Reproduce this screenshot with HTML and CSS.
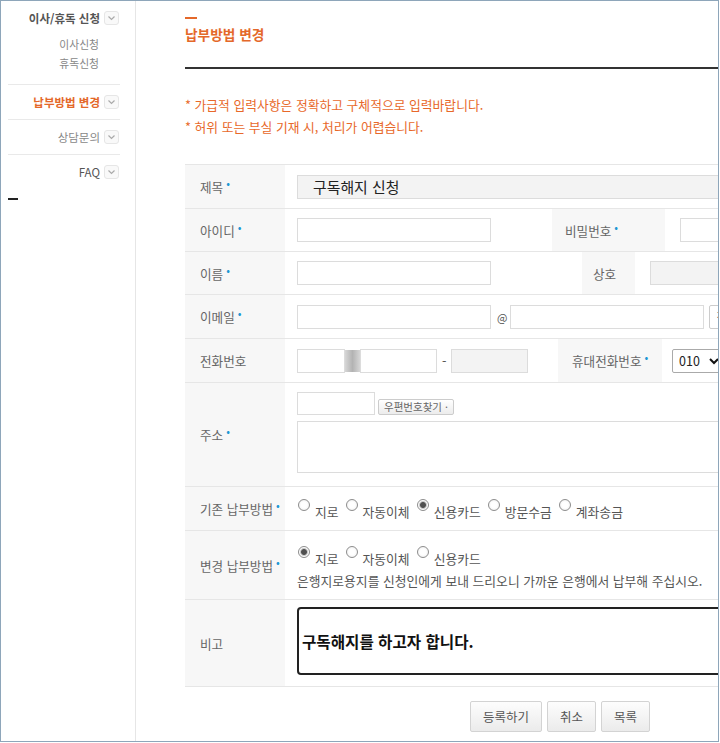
FILE: index.html
```html
<!DOCTYPE html>
<html lang="ko">
<head>
  <meta charset="UTF-8">
  <title>납부방법 변경</title>
  <link rel="stylesheet" href="styles.css">
</head>
<body>

  <div class="frame">
    <aside class="side">
      <ul class="menu">
        <li class="menu-item">
          <a class="menu-link strong">이사/휴독 신청
            <span class="chev"><svg width="13" height="12" viewBox="0 0 13 12"><polyline points="3.5,4.5 6.5,7.5 9.5,4.5" fill="none" stroke="#aaa" stroke-width="1.2"/></svg></span>
          </a>
          <ul class="sub">
            <li>이사신청</li>
            <li>휴독신청</li>
          </ul>
        </li>
        <li class="menu-item">
          <a class="menu-link active">납부방법 변경
            <span class="chev"><svg width="13" height="12" viewBox="0 0 13 12"><polyline points="3.5,4.5 6.5,7.5 9.5,4.5" fill="none" stroke="#aaa" stroke-width="1.2"/></svg></span>
          </a>
        </li>
        <li class="menu-item">
          <a class="menu-link">상담문의
            <span class="chev"><svg width="13" height="12" viewBox="0 0 13 12"><polyline points="3.5,4.5 6.5,7.5 9.5,4.5" fill="none" stroke="#aaa" stroke-width="1.2"/></svg></span>
          </a>
        </li>
        <li class="menu-item last">
          <a class="menu-link faq">FAQ
            <span class="chev"><svg width="13" height="12" viewBox="0 0 13 12"><polyline points="3.5,4.5 6.5,7.5 9.5,4.5" fill="none" stroke="#aaa" stroke-width="1.2"/></svg></span>
          </a>
        </li>
      </ul>
      <span class="side-dash"></span>
    </aside>

    <main class="content">
      <span class="title-dash"></span>
      <h2 class="title">납부방법 변경</h2>
      <div class="title-line"></div>

      <ul class="notice">
        <li>* 가급적 입력사항은 정확하고 구체적으로 입력바랍니다.</li>
        <li>* 허위 또는 부실 기재 시, 처리가 어렵습니다.</li>
      </ul>

      <div class="form">
        <div class="row row-44">
          <div class="th">제목<em class="req">•</em></div>
          <div class="td">
            <div class="in ro in-subject">구독해지 신청</div>
          </div>
        </div>

        <div class="row">
          <div class="th">아이디<em class="req">•</em></div>
          <div class="td td-id">
            <div class="in in-md"></div>
          </div>
          <div class="th th-pw">비밀번호<em class="req">•</em></div>
          <div class="td td-pw">
            <div class="in in-sm"></div>
          </div>
        </div>

        <div class="row">
          <div class="th">이름<em class="req">•</em></div>
          <div class="td td-name">
            <div class="in in-md"></div>
          </div>
          <div class="th th-co">상호</div>
          <div class="td td-co">
            <div class="in ro in-md"></div>
          </div>
        </div>

        <div class="row row-44">
          <div class="th">이메일<em class="req">•</em></div>
          <div class="td">
            <div class="in in-md"></div>
            <span class="at">@</span>
            <div class="in in-md"></div>
            <div class="sel sel-mail">직접</div>
          </div>
        </div>

        <div class="row row-44">
          <div class="th">전화번호</div>
          <div class="td td-phone">
            <div class="in in-xs"></div>
            <div class="blur"></div>
            <div class="in in-ph"></div>
            <span class="dash">-</span>
            <div class="in ro in-ph"></div>
          </div>
          <div class="th th-mob">휴대전화번호<em class="req">•</em></div>
          <div class="td td-mob">
            <div class="sel">010
              <svg width="12" height="10" viewBox="0 0 12 10"><polyline points="2,3 6,7 10,3" fill="none" stroke="#111" stroke-width="2"/></svg>
            </div>
          </div>
        </div>

        <div class="row row-addr">
          <div class="th">주소<em class="req">•</em></div>
          <div class="td td-addr">
            <div class="addr-top">
              <div class="in in-zip"></div>
              <button class="zip-btn" type="button">우편번호찾기 ·</button>
            </div>
            <div class="in in-addr"></div>
          </div>
        </div>

        <div class="row row-44">
          <div class="th">기존 납부방법<em class="req">•</em></div>
          <div class="td td-old">
            <div class="radios">
              <label class="opt"><input type="radio" name="old"><span>지로</span></label>
              <label class="opt"><input type="radio" name="old"><span>자동이체</span></label>
              <label class="opt"><input type="radio" name="old" checked><span>신용카드</span></label>
              <label class="opt"><input type="radio" name="old"><span>방문수금</span></label>
              <label class="opt"><input type="radio" name="old"><span>계좌송금</span></label>
            </div>
          </div>
        </div>

        <div class="row row-change">
          <div class="th">변경 납부방법<em class="req">•</em></div>
          <div class="td td-change">
            <div class="radios">
              <label class="opt"><input type="radio" name="new" checked><span>지로</span></label>
              <label class="opt"><input type="radio" name="new"><span>자동이체</span></label>
              <label class="opt"><input type="radio" name="new"><span>신용카드</span></label>
            </div>
            <p class="help">은행지로용지를 신청인에게 보내 드리오니 가까운 은행에서 납부해 주십시오.</p>
          </div>
        </div>

        <div class="row row-memo">
          <div class="th">비고</div>
          <div class="td td-memo">
            <div class="memo">구독해지를 하고자 합니다.</div>
          </div>
        </div>
      </div>

      <div class="btns">
        <button class="btn" type="button">등록하기</button>
        <button class="btn" type="button">취소</button>
        <button class="btn" type="button">목록</button>
      </div>
    </main>
  </div>

</body>
</html>
```

FILE: styles.css
```css
* {
  box-sizing: border-box;
}

body {
  margin: 0;
  font-family: "Noto Sans CJK KR", "Noto Sans", sans-serif;
  background-color: #fff;
  color: #555;
}

.frame {
  width: 719px;
  height: 742px;
  border: 1px solid #8ea6ba;
  display: flex;
  overflow: hidden;
}

/* sidebar */
.side {
  flex: none;
  width: 135px;
  border-right: 1px solid #e6e6e6;
}

.menu {
  list-style: none;
  margin: 0 0 0 7px;
  padding: 0;
  width: 112px;
}

.menu-item {
  border-bottom: 1px solid #e9e9e9;
}

.menu-item.last {
  border-bottom: none;
}

.menu-link {
  height: 34px;
  display: flex;
  align-items: center;
  justify-content: flex-end;
  gap: 4px;
  padding-right: 1px;
  font-size: 11.5px;
  color: #888;
}

.menu-link.strong {
  color: #555;
  font-weight: bold;
}

.menu-link.active {
  color: #e4682a;
  font-weight: bold;
}

.menu-link.faq {
  color: #555;
}

.chev {
  width: 15px;
  height: 14px;
  border: 1px solid #e6e6e6;
  border-radius: 3px;
  background-color: #f9f9f9;
  display: flex;
  align-items: center;
  justify-content: center;
}

.sub {
  list-style: none;
  margin: 0;
  padding: 0 21px 11px 0;
  text-align: right;
  font-size: 10.8px;
  line-height: 19px;
  color: #888;
}

.side-dash {
  display: block;
  width: 10px;
  height: 2px;
  margin: 9px 0 0 7px;
  background-color: #222;
}

/* content */
.content {
  flex: none;
  width: 820px;
  padding: 16px 0 0 49px;
}

.title-dash {
  display: block;
  width: 12px;
  height: 2px;
  background-color: #e4682a;
}

.title {
  margin: 5px 0 0;
  font-size: 13.7px;
  line-height: 20px;
  color: #e4682a;
}

.title-line {
  width: 750px;
  height: 2px;
  margin-top: 23px;
  background-color: #333;
}

.notice {
  list-style: none;
  margin: 25px 0 0;
  padding: 0;
  font-size: 12.8px;
  line-height: 22px;
  color: #e8682a;
}

.form {
  width: 750px;
  margin-top: 26px;
  border-top: 1px solid #e6e6e6;
}

.row {
  display: flex;
  height: 43px;
  border-bottom: 1px solid #e6e6e6;
}

.row-44 {
  height: 44px;
}

.row-addr {
  height: 104px;
}

.row-change {
  height: 69px;
}

.row-memo {
  height: 87px;
}

.th {
  flex: none;
  width: 100px;
  display: flex;
  align-items: center;
  padding-left: 15px;
  background-color: #f7f7f7;
  font-size: 12.6px;
  color: #666;
}

.req {
  font-style: normal;
  color: #1f97d4;
  font-size: 11px;
  margin-left: 3px;
  margin-top: -7px;
}

.td {
  display: flex;
  align-items: center;
  padding: 0 12px;
  font-size: 12.8px;
}

.in {
  flex: none;
  height: 24px;
  border: 1px solid #dcdcdc;
  background-color: #fff;
}

.in.ro {
  background-color: #f3f3f3;
}

.in-subject {
  width: 600px;
  padding-left: 15px;
  font-size: 14.9px;
  line-height: 22px;
  color: #222;
}

.in-md {
  width: 194px;
}

.in-sm {
  width: 60px;
}

.in-xs {
  width: 48px;
}

.in-ph {
  width: 77px;
}

.td-id {
  width: 267px;
}

.td-name {
  width: 297px;
}

.td-phone {
  width: 273px;
}

.th-pw {
  width: 113px;
  padding-left: 13px;
}

.th-co {
  width: 53px;
  padding-left: 11px;
}

.th-mob {
  width: 104px;
  padding-left: 14px;
}

.td-pw,
.td-co {
  padding-left: 15px;
}

.td-mob {
  padding-left: 10px;
}

.at {
  margin: 0 3px 0 6px;
  font-size: 11px;
  color: #555;
}

.dash {
  margin: 0 5px;
  color: #555;
}

.blur {
  width: 15px;
  height: 22px;
  background: linear-gradient(90deg, #d6d6d6, #b3b3b3 50%, #d6d6d6);
}

.sel {
  flex: none;
  height: 24px;
  width: 60px;
  display: flex;
  align-items: center;
  gap: 8px;
  padding-left: 6px;
  border: 1px solid #aaa;
  border-radius: 2px;
  background-color: #fff;
  font-size: 12.5px;
  color: #222;
}

.sel-mail {
  margin-left: 5px;
  width: 80px;
  border-color: #ccc;
  color: #555;
}

.td-addr {
  flex-direction: column;
  align-items: flex-start;
  justify-content: flex-start;
  padding-top: 9px;
}

.addr-top {
  display: flex;
  align-items: flex-end;
  gap: 3px;
}

.in-zip {
  width: 78px;
  height: 23px;
}

.zip-btn {
  height: 16px;
  padding: 0 5px;
  border: 1px solid #ccc;
  border-radius: 2px;
  background: linear-gradient(#fff, #ececec);
  font-family: inherit;
  font-size: 10.5px;
  line-height: 14px;
  color: #666;
}

.in-addr {
  width: 600px;
  height: 52px;
  margin-top: 6px;
}

.radios {
  display: flex;
  align-items: flex-start;
}

.opt {
  display: flex;
  align-items: flex-start;
  margin-right: 6px;
  color: #555;
}

.opt input {
  appearance: none;
  width: 12px;
  height: 12px;
  margin: 0 5px 0 1px;
  border: 1px solid #8d8d8d;
  border-radius: 50%;
  background: radial-gradient(circle, #fff 40%, #e9e9e9);
}

.opt input:checked {
  background: radial-gradient(circle, #505050 0 2.5px, #bdbdbd 3.3px, #fff 4.5px);
}

.opt span {
  margin-top: 5px;
  line-height: 16px;
}

.td-old {
  align-items: flex-start;
  padding-top: 12px;
}

.td-change {
  flex-direction: column;
  align-items: flex-start;
  justify-content: flex-start;
  padding-top: 15px;
}

.help {
  margin: 5px 0 0;
  line-height: 18px;
  color: #555;
}

.td-memo {
  align-items: flex-start;
  padding-top: 7px;
}

.memo {
  width: 600px;
  height: 68px;
  display: flex;
  align-items: center;
  padding-left: 3px;
  border: 2px solid #222;
  border-radius: 4px;
  font-size: 15.6px;
  font-weight: bold;
  color: #111;
}

.btns {
  width: 750px;
  display: flex;
  justify-content: center;
  gap: 5px;
  margin-top: 14px;
}

.btn {
  height: 31px;
  padding: 0 12px;
  border: 1px solid #d3d3d3;
  border-radius: 2px;
  background: linear-gradient(#fdfdfd, #ebebeb);
  font-family: inherit;
  font-size: 12.5px;
  color: #555;
}
```
